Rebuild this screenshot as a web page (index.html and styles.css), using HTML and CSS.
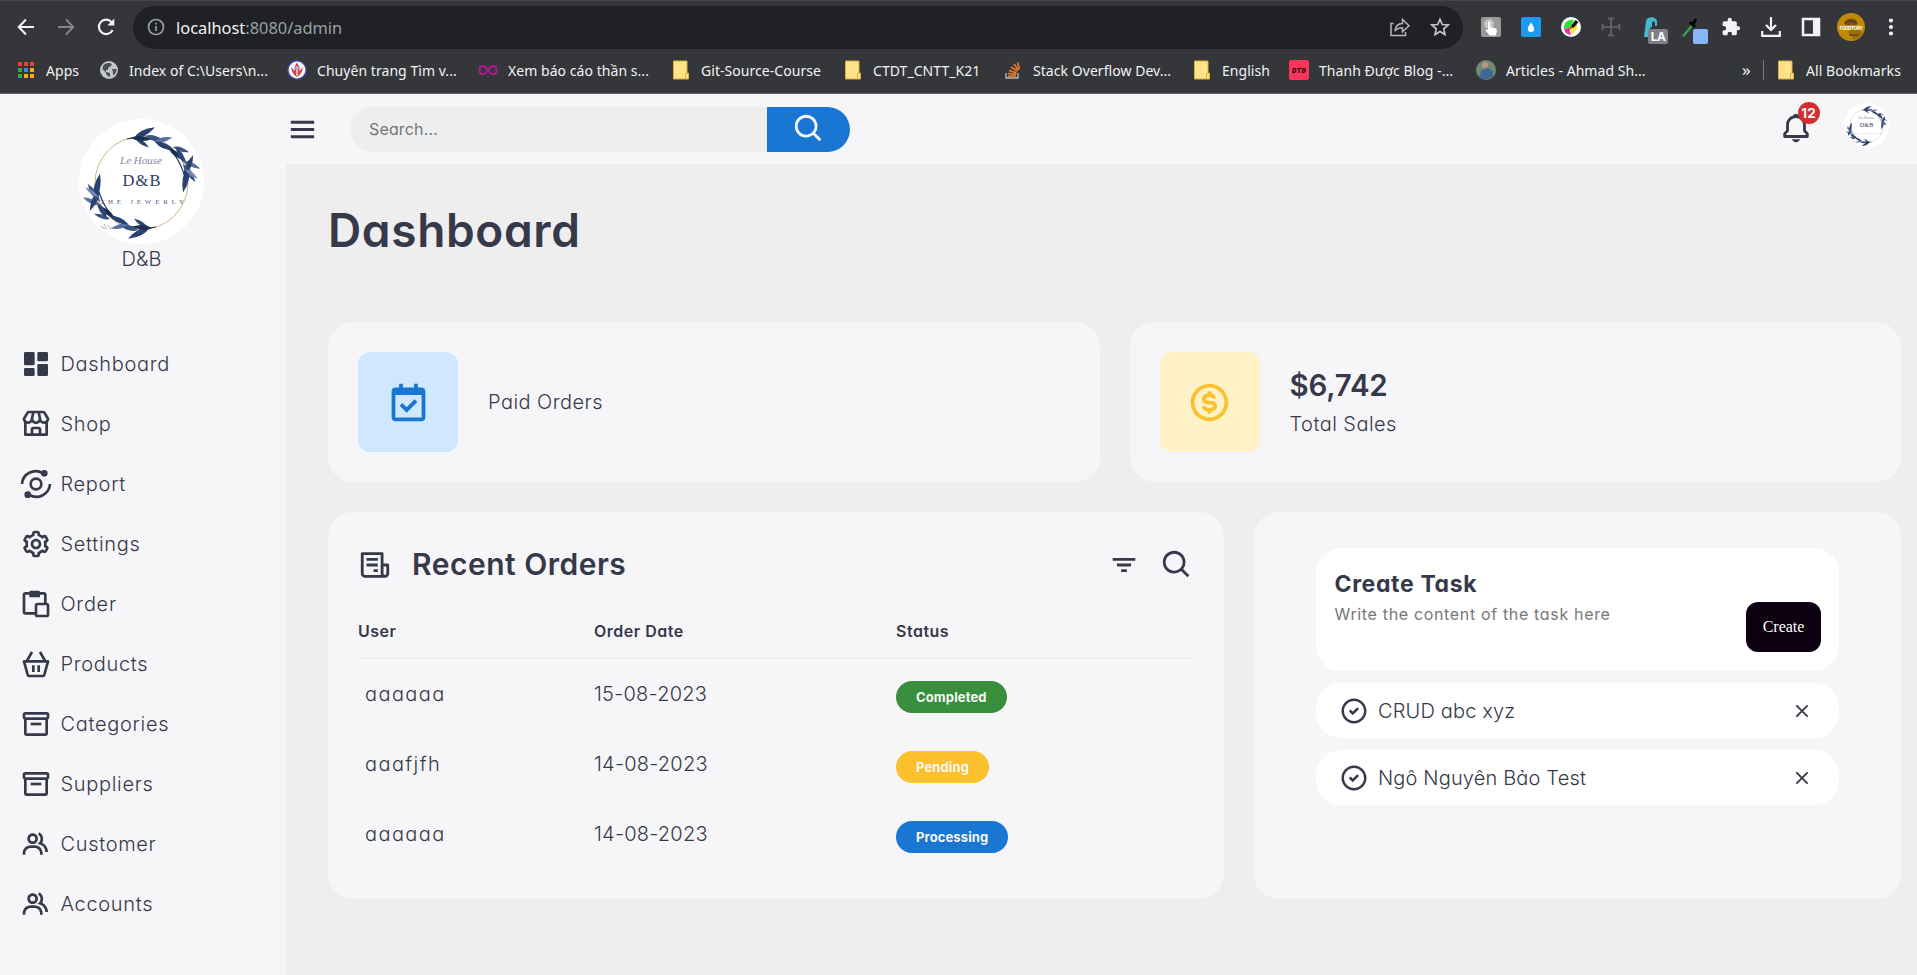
FILE: index.html
```html
<!DOCTYPE html>
<html lang="vi">
<head>
<meta charset="utf-8">
<title>Dashboard</title>
<link rel="stylesheet" href="styles.css">
</head>
<body>
<svg class="defs" width="0" height="0">
  <defs>
    <path id="leaf" d="M0 0Q8-5 20 0Q8 4.500 0 0Z"/>
    <g id="branch">
      <path d="M48 20Q66 16 82 24T106 58" fill="none" stroke="#24385c" stroke-width="1.200"/>
      <use href="#leaf" transform="translate(54 20) rotate(-28) scale(1.25)" fill="#2a4270"/>
      <use href="#leaf" transform="translate(56 19) rotate(34) scale(.85)" fill="#2f4775"/>
      <use href="#leaf" transform="translate(52 19) rotate(4) scale(1)" fill="#1d2f50"/>
      <use href="#leaf" transform="translate(66 17) rotate(12) scale(.9)" fill="#3b5484"/>
      <use href="#leaf" transform="translate(75 23) rotate(-14) scale(.95)" fill="#5a71a0"/>
      <use href="#leaf" transform="translate(76 23) rotate(24) scale(1.1)" fill="#2a4270"/>
      <use href="#leaf" transform="translate(94 28) rotate(18) scale(.85)" fill="#3b5484"/>
      <use href="#leaf" transform="translate(90 30) rotate(36) scale(1)" fill="#1d2f50"/>
      <use href="#leaf" transform="translate(97 29) rotate(58) scale(1)" fill="#2f4775"/>
      <use href="#leaf" transform="translate(104 42) rotate(24) scale(.95)" fill="#5a71a0"/>
      <use href="#leaf" transform="translate(105 57) rotate(-66) scale(1.15)" fill="#2a4270"/>
      <use href="#leaf" transform="translate(104 45) rotate(56) scale(1.1)" fill="#3b5484"/>
      <use href="#leaf" transform="translate(109 48) rotate(101) scale(1.3)" fill="#2a4270"/>
      <use href="#leaf" transform="translate(106 50) rotate(38) scale(.8)" fill="#7488b2"/>
    </g>
    <symbol id="logo" viewBox="0 0 125 125">
      <circle cx="62.500" cy="62.500" r="62.500" fill="#fff"/>
      <circle cx="62.500" cy="64" r="46.500" fill="none" stroke="#cdb77c" stroke-width="1"/>
      <use href="#branch"/>
      <use href="#branch" transform="rotate(180 62.500 64)"/>
      <path d="M22 107l4 3M25 105l3 5M29 106l3 4M31 111l2-3" stroke="#c9c2b4" stroke-width="1.200"/>
      <text x="41" y="45" class="logo-script" textLength="42">Le House</text>
      <text x="43.500" y="67" class="logo-name" textLength="38">D&amp;B</text>
      <text x="21" y="85" class="logo-sub" textLength="84">THE JEWERLY</text>
    </symbol>
    <symbol id="folder" viewBox="0 0 20 20"><path d="M2.500 1h13.500v12h1.500v6H2.500z" fill="#ffe28a" stroke="#d9b23c" stroke-width="1"/><path d="M14.500 18.500v-5h2.500" fill="none" stroke="#d9b23c"/></symbol>
    <symbol id="archive" viewBox="0 0 24 24"><path d="M20 3H4a2 2 0 0 0-2 2v2a2 2 0 0 0 1 1.720V19a2 2 0 0 0 2 2h14a2 2 0 0 0 2-2V8.720A2 2 0 0 0 22 7V5a2 2 0 0 0-2-2zM4 5h16v2H4zm1 14V9h14v10z"/><path d="M8 11h8v2H8z"/></symbol>
    <symbol id="group" viewBox="0 0 24 24"><path d="M16.604 11.048a5.670 5.670 0 0 0 .751-3.440c-.179-1.784-1.175-3.361-2.803-4.440l-1.105 1.666c1.119.742 1.800 1.799 1.918 2.974a3.693 3.693 0 0 1-1.072 2.986l-1.192 1.192 1.618.475C18.951 13.701 19 17.957 19 18h2c0-1.789-.956-5.285-4.396-6.952z"/><path d="M9.500 12c2.206 0 4-1.794 4-4s-1.794-4-4-4-4 1.794-4 4 1.794 4 4 4zm0-6c1.103 0 2 .897 2 2s-.897 2-2 2-2-.897-2-2 .897-2 2-2zm1.500 7H8c-3.309 0-6 2.691-6 6v1h2v-1c0-2.206 1.794-4 4-4h3c2.206 0 4 1.794 4 4v1h2v-1c0-3.309-2.691-6-6-6z"/></symbol>
    <symbol id="search" viewBox="0 0 24 24"><path d="M10 18a7.952 7.952 0 0 0 4.897-1.688l4.396 4.396 1.414-1.414-4.396-4.396A7.952 7.952 0 0 0 18 10c0-4.411-3.589-8-8-8s-8 3.589-8 8 3.589 8 8 8zm0-14c3.309 0 6 2.691 6 6s-2.691 6-6 6-6-2.691-6-6 2.691-6 6-6z"/></symbol>
    <symbol id="check" viewBox="0 0 24 24"><path d="M12 2C6.486 2 2 6.486 2 12s4.486 10 10 10 10-4.486 10-10S17.514 2 12 2zm0 18c-4.411 0-8-3.589-8-8s3.589-8 8-8 8 3.589 8 8-3.589 8-8 8z"/><path d="M8.600 11.600l2.400 2.400 4.300-4.300" fill="none" stroke="currentColor" stroke-width="2"/></symbol>
    <symbol id="close" viewBox="0 0 24 24"><path d="M6.800 6.800l10.400 10.400M17.200 6.800L6.800 17.200" fill="none" stroke="currentColor" stroke-width="1.700"/></symbol>
  </defs>
</svg>

<header class="browser">
  <div class="toolbar">
    <div class="nav-buttons">
      <svg width="20" height="20" viewBox="0 0 20 20" fill="none" stroke="#f1f3f4" stroke-width="2"><path d="M18 10H3M10 2.500L2.700 10l7.300 7.500"/></svg>
      <svg width="20" height="20" viewBox="0 0 20 20" fill="none" stroke="#828387" stroke-width="2"><path d="M2 10h15M10 2.500L17.300 10 10 17.500"/></svg>
      <svg width="20" height="20" viewBox="0 0 20 20" fill="none" stroke="#f1f3f4" stroke-width="2.200"><path d="M16.600 13A7.200 7.200 0 1 1 15.500 5"/><path d="M18.300 1.500v7h-7z" fill="#f1f3f4" stroke="none"/></svg>
    </div>
    <div class="address">
      <svg width="18" height="18" viewBox="0 0 18 18" fill="none" stroke="#9aa0a6" stroke-width="1.700"><circle cx="9" cy="9" r="7.500"/><path d="M9 8v5M9 4.800v1.800"/></svg>
      <span class="url"><b>localhost</b>:8080/admin</span>
      <svg class="share" width="22" height="22" viewBox="0 0 22 22" fill="none" stroke="#b4b7bb" stroke-width="1.500"><path d="M4.500 7.500H2v12h14.500V16"/><path d="M6 15c.5-5 3-7.500 7.500-7.500V3.500L20 9.800l-6.500 6v-4c-3.500 0-6 1-7.500 3.200z"/></svg>
      <svg width="20" height="20" viewBox="0 0 20 20" fill="none" stroke="#c6c9cd" stroke-width="1.600"><path d="M10 2.200l2.300 5.300 5.800.5-4.400 3.800 1.300 5.700-5-3-5 3 1.300-5.700L1.900 8l5.800-.5z"/></svg>
    </div>
    <div class="extensions">
      <svg width="20" height="20" viewBox="0 0 20 20"><rect width="20" height="20" rx="2" fill="#999"/><circle cx="8" cy="7" r="5" fill="#c4c4c4"/><path d="M7 5.500c0-1.500 2.400-1.500 2.400 0V10l5 1.200c1.200.4 1.600 1.500 1.400 2.800L15 18.500H8.500L4.500 13c1-.8 1.800-.5 2.500.3z" fill="#fff"/></svg>
      <svg width="20" height="20" viewBox="0 0 20 20"><rect width="20" height="20" rx="2" fill="#1d9bf0"/><path d="M10 5.500c1.600 2.600 3.200 4.400 3.200 6.300a3.200 3.200 0 0 1-6.400 0c0-1.900 1.600-3.700 3.200-6.300z" fill="#fff"/></svg>
      <svg width="20" height="20" viewBox="0 0 20 20"><circle cx="10" cy="10" r="10" fill="#fff"/><path d="M9 11L3 12a8 8 0 0 1 10-9z" fill="#28e23a"/><path d="M10 10l6-3a8 8 0 0 1-6 10z" fill="#f7ea32"/><path d="M8 11l2 7a8 8 0 0 1-7-6z" fill="#e92fae"/><path d="M5 16l8-11 3 2z" fill="#f03434"/><path d="M10 9l4.500-6 3 2-5 6z" fill="#111"/></svg>
      <svg width="20" height="20" viewBox="0 0 20 20" fill="none" stroke="#68696d" stroke-width="1.600"><path d="M10 1v18M1 10h18M7 1.500h6M7 18.500h6M1.500 7v6M18.500 7v6"/></svg>
      <span class="ext-badged"><svg width="20" height="20" viewBox="0 0 20 20"><path d="M3 20L5 4c1-5 11-5 11 1v4h-2V6c0-2-3-2-3 0v4l-2 1v9z" fill="#46b8cd"/></svg><i class="ext-la">LA</i></span>
      <span class="ext-badged"><svg width="20" height="20" viewBox="0 0 20 20"><path d="M2 19.500L11.500 8" stroke="#2fae55" stroke-width="2"/><path d="M9 5l5 5M11.500 8.500L15 2" stroke="#050505" stroke-width="3"/></svg><i class="ext-color"></i></span>
      <svg width="20" height="20" viewBox="0 0 24 24" fill="#f1f3f4"><path d="M20.500 11H19V7a2 2 0 0 0-2-2h-4V3.500a2.500 2.500 0 0 0-5 0V5H4a2 2 0 0 0-2 2v3.800h1.500a2.700 2.700 0 0 1 0 5.400H2V20a2 2 0 0 0 2 2h3.800v-1.500a2.700 2.700 0 0 1 5.400 0V22H17a2 2 0 0 0 2-2v-4h1.500a2.500 2.500 0 0 0 0-5z"/></svg>
      <svg width="20" height="20" viewBox="0 0 20 20" fill="none" stroke="#f1f3f4" stroke-width="2.200"><path d="M10 0v13M5 8l5 5 5-5M1.200 14v4.800h17.600V14"/></svg>
      <svg width="20" height="20" viewBox="0 0 20 20" fill="none" stroke="#f1f3f4"><rect x="2" y="2" width="16" height="16" stroke-width="2.500"/><path d="M14.700 2v16" stroke-width="5.500"/></svg>
      <svg class="profile" width="28" height="28" viewBox="0 0 28 28"><circle cx="14" cy="14" r="14" fill="#c08a06"/><path d="M7 10c2-6 12-6 14 0-1 3-4 2-7 2s-6 1-7-2z" fill="#7a5412"/><path d="M19 14l7 6a14 14 0 0 1-9 7l-6-8z" fill="#9c6e09"/><path d="M8 10c3-3 8-3 11 0M12 22h9" stroke="#3f2c10" fill="none"/><text x="2.500" y="17" class="profile-text" textLength="23">FOODTORY</text></svg>
      <svg width="20" height="20" viewBox="0 0 20 20" fill="#f1f3f4"><circle cx="10" cy="3.500" r="2.100"/><circle cx="10" cy="10" r="2.100"/><circle cx="10" cy="16.500" r="2.100"/></svg>
    </div>
  </div>
  <div class="bookmarks">
    <span class="bm"><svg width="20" height="20" viewBox="0 0 20 20"><path d="M2 2h4v4H2zM8 2h4v4H8zM14 2h4v4h-4z" fill="#ea4335"/><path d="M2 8h4v4H2z" fill="#34a853"/><path d="M8 8h4v4H8z" fill="#4285f4"/><path d="M14 8h4v4h-4zM8 14h4v4H8zM14 14h4v4h-4z" fill="#fbaf05"/><path d="M2 14h4v4H2z" fill="#34a853"/></svg>Apps</span>
    <span class="bm"><svg width="20" height="20" viewBox="0 0 20 20"><circle cx="10" cy="10" r="9" fill="#c4c7ca"/><path d="M4 6c2-3 5-3.500 8-2.500l1 1.500-4 3v2H7v2l4 1v4c-3-.5-4-3-4.500-5L3.500 9zM13 9h4.500c.4 3-1.500 5.500-3.500 6.500V12z" fill="#4b4d52"/></svg>Index of C:\Users\n...</span>
    <span class="bm"><svg width="20" height="20" viewBox="0 0 20 20"><circle cx="10" cy="10" r="9.200" fill="#f5f6fb" stroke="#3b4593" stroke-width="1.500"/><path d="M4 7c1 6 3 8 6 10 3-2 5-4 6-10l-3.500 4V7L10 2.500 7.500 7v4z" fill="#e03b3b"/><circle cx="10" cy="8" r="2" fill="#8ec2e8"/><path d="M10 10v6" stroke="#fff" stroke-width="1.200"/></svg>Chuyên trang Tìm v...</span>
    <span class="bm"><svg width="20" height="20" viewBox="0 0 20 20" fill="none" stroke="#b01a90" stroke-width="2"><path d="M10 10C7 4.500 1.500 4.500 1.500 10S7 15.500 10 10s8.500-5.500 8.500 0S13 15.500 10 10z"/></svg>Xem báo cáo thần s...</span>
    <span class="bm"><svg width="20" height="20"><use href="#folder"/></svg>Git-Source-Course</span>
    <span class="bm"><svg width="20" height="20"><use href="#folder"/></svg>CTDT_CNTT_K21</span>
    <span class="bm"><svg width="20" height="20" viewBox="0 0 20 20" fill="none"><path d="M3 13v5h12v-5" stroke="#b5b7ba" stroke-width="1.400"/><path d="M5 16h8M5.200 13.500l8 .7M6 10.500l7.500 2.200M8 7l6.500 4M11 4l4.500 6M14.500 2.500l2 6.500" stroke="#f48024" stroke-width="1.500"/></svg>Stack Overflow Dev...</span>
    <span class="bm"><svg width="20" height="20"><use href="#folder"/></svg>English</span>
    <span class="bm"><svg width="20" height="20" viewBox="0 0 20 20"><rect width="20" height="20" rx="2" fill="#fb3559"/><text x="3" y="12.800" class="dtd" textLength="14">DTD</text></svg>Thanh Được Blog -...</span>
    <span class="bm"><svg width="20" height="20" viewBox="0 0 20 20"><circle cx="10" cy="10" r="10" fill="#738a70"/><path d="M3 17l3-7 6-2 5 3v5a10 10 0 0 1-14 1z" fill="#3e6797"/><circle cx="9" cy="5" r="3" fill="#bb9684"/></svg>Articles - Ahmad Sh...</span>
    <span class="more">»</span>
    <span class="bm all"><svg width="20" height="20"><use href="#folder"/></svg>All Bookmarks</span>
  </div>
</header>

<div class="app">
  <aside class="sidebar">
    <div class="brand">
      <svg width="125" height="125"><use href="#logo"/></svg>
      <span>D&amp;B</span>
    </div>
    <nav class="menu">
      <a><svg viewBox="0 0 24 24"><path d="M4 13h6a1 1 0 0 0 1-1V4a1 1 0 0 0-1-1H4a1 1 0 0 0-1 1v8a1 1 0 0 0 1 1zm-1 7a1 1 0 0 0 1 1h6a1 1 0 0 0 1-1v-4a1 1 0 0 0-1-1H4a1 1 0 0 0-1 1v4zm10 0a1 1 0 0 0 1 1h6a1 1 0 0 0 1-1v-7a1 1 0 0 0-1-1h-6a1 1 0 0 0-1 1v7zm1-10h6a1 1 0 0 0 1-1V4a1 1 0 0 0-1-1h-6a1 1 0 0 0-1 1v5a1 1 0 0 0 1 1z"/></svg>Dashboard</a>
      <a><svg viewBox="0 0 24 24"><path d="M21.999 8a.997.997 0 0 0-.143-.515L19.147 2.970A2.010 2.010 0 0 0 17.433 2H6.565c-.698 0-1.355.372-1.714.971L2.142 7.485A.997.997 0 0 0 1.999 8c0 1.005.386 1.914 1 2.618V20a1 1 0 0 0 1 1h16a1 1 0 0 0 1-1v-9.382c.614-.704 1-1.613 1-2.618zm-2.016.251A2.002 2.002 0 0 1 17.999 10c-1.103 0-2-.897-2-2 0-.068-.025-.128-.039-.192l.020-.004L15.219 4h2.214l2.550 4.251zm-9.977-.186L10.818 4h2.361l.813 4.065C13.958 9.137 13.080 10 11.999 10s-1.959-.863-1.993-1.935zM6.565 4h2.214l-.760 3.804.020.004c-.015.064-.040.124-.040.192 0 1.103-.897 2-2 2a2.002 2.002 0 0 1-1.984-1.749L6.565 4zm3.434 15v-3h4v3h-4zm6 0v-3a2 2 0 0 0-2-2h-4a2 2 0 0 0-2 2v3h-3v-7.142c.321.083.652.142 1 .142a3.990 3.990 0 0 0 3-1.357c.733.832 1.807 1.357 3 1.357s2.267-.525 3-1.357A3.990 3.990 0 0 0 17.999 12c.348 0 .679-.059 1-.142V19h-3z"/></svg>Shop</a>
      <a><svg viewBox="0 0 24 24"><g fill="none" stroke="currentColor" stroke-width="2"><circle cx="12" cy="12" r="4"/><path d="M1.500 12a10.300 10.300 0 0 1 15.500-8.200M22.500 12a10.300 10.300 0 0 1-15.500 8.200"/></g><circle cx="18.200" cy="4" r="2.500"/><circle cx="5.800" cy="20" r="2.500"/></svg>Report</a>
      <a><svg viewBox="0 0 24 24"><path d="M12 16c2.206 0 4-1.794 4-4s-1.794-4-4-4-4 1.794-4 4 1.794 4 4 4zm0-6c1.084 0 2 .916 2 2s-.916 2-2 2-2-.916-2-2 .916-2 2-2z"/><path d="m2.845 16.136 1 1.730c.531.917 1.809 1.261 2.730.730l.529-.306A8.100 8.100 0 0 0 9 19.402V20c0 1.103.897 2 2 2h2c1.103 0 2-.897 2-2v-.598a8.132 8.132 0 0 0 1.896-1.111l.529.306c.923.530 2.198.188 2.731-.731l.999-1.729a2.001 2.001 0 0 0-.731-2.732l-.505-.292a7.718 7.718 0 0 0 0-2.224l.505-.292a2.002 2.002 0 0 0 .731-2.732l-.999-1.729c-.531-.920-1.808-1.265-2.731-.732l-.529.306A8.100 8.100 0 0 0 15 4.598V4c0-1.103-.897-2-2-2h-2c-1.103 0-2 .897-2 2v.598a8.132 8.132 0 0 0-1.896 1.111l-.529-.306c-.924-.531-2.200-.187-2.731.732l-.999 1.729a2.001 2.001 0 0 0 .731 2.732l.505.292a7.683 7.683 0 0 0 0 2.223l-.505.292a2.003 2.003 0 0 0-.731 2.733zm3.326-2.758A5.703 5.703 0 0 1 6 12c0-.462.058-.926.170-1.378a.999.999 0 0 0-.470-1.108l-1.123-.650.998-1.729 1.145.662a.997.997 0 0 0 1.188-.142 6.071 6.071 0 0 1 2.384-1.399A1 1 0 0 0 11 5.300V4h2v1.300a1 1 0 0 0 .708.956 6.083 6.083 0 0 1 2.384 1.399.999.999 0 0 0 1.188.142l1.144-.661 1 1.729-1.124.649a1 1 0 0 0-.470 1.108c.112.452.170.916.170 1.378 0 .461-.058.925-.171 1.378a1 1 0 0 0 .471 1.108l1.123.649-.998 1.729-1.145-.661a.996.996 0 0 0-1.188.142 6.071 6.071 0 0 1-2.384 1.399A1 1 0 0 0 13 18.700l.002 1.300H11v-1.300a1 1 0 0 0-.708-.956 6.083 6.083 0 0 1-2.384-1.399.992.992 0 0 0-1.188-.141l-1.144.662-1-1.729 1.124-.651a1 1 0 0 0 .471-1.108z"/></svg>Settings</a>
      <a><svg viewBox="0 0 24 24"><path d="M20 11V5c0-1.103-.897-2-2-2h-3a1 1 0 0 0-1-1H8a1 1 0 0 0-1 1H4c-1.103 0-2 .897-2 2v13c0 1.103.897 2 2 2h7c0 1.103.897 2 2 2h7c1.103 0 2-.897 2-2v-7c0-1.103-.897-2-2-2zm-9 2v5H4V5h3v2h8V5h3v6h-5c-1.103 0-2 .897-2 2zm2 7v-7h7l.001 7H13z"/></svg>Order</a>
      <a><svg viewBox="0 0 24 24"><path d="M21 9h-1.420l-3.712-6.496-1.736.992L17.277 9H6.723l3.146-5.504-1.737-.992L4.420 9H3a1.001 1.001 0 0 0-.965 1.263l2.799 10.263A2.004 2.004 0 0 0 6.764 22h10.473c.898 0 1.692-.605 1.930-1.475l2.799-10.263A.998.998 0 0 0 21 9zm-3.764 11H6.764L4.310 11h15.380z"/><path d="M9 13h2v5H9zm4 0h2v5h-2z"/></svg>Products</a>
      <a><svg><use href="#archive"/></svg>Categories</a>
      <a><svg><use href="#archive"/></svg>Suppliers</a>
      <a><svg><use href="#group"/></svg>Customer</a>
      <a><svg><use href="#group"/></svg>Accounts</a>
    </nav>
  </aside>

  <div class="content">
    <div class="navbar">
      <svg class="burger" viewBox="0 0 24 24"><path d="M4 6h16v2H4zm0 5h16v2H4zm0 5h16v2H4z"/></svg>
      <div class="search"><span class="search-input">Search...</span><span class="search-btn"><svg width="34" height="34"><use href="#search"/></svg></span></div>
      <span class="bell"><svg width="34" height="34" viewBox="0 0 24 24"><path d="M19 13.586V10c0-3.217-2.185-5.927-5.145-6.742C13.562 2.520 12.846 2 12 2s-1.562.520-1.855 1.258C7.185 4.074 5 6.783 5 10v3.586l-1.707 1.707A.996.996 0 0 0 3 16v2a1 1 0 0 0 1 1h16a1 1 0 0 0 1-1v-2a.996.996 0 0 0-.293-.707L19 13.586zM19 17H5v-.586l1.707-1.707A.996.996 0 0 0 7 14v-4c0-2.757 2.243-5 5-5s5 2.243 5 5v4c0 .266.105.520.293.707L19 16.414V17zm-7 5a2.980 2.980 0 0 0 2.818-2H9.182A2.980 2.980 0 0 0 12 22z"/></svg><i class="count">12</i></span>
      <svg class="avatar" width="45" height="45"><use href="#logo"/></svg>
    </div>
    <main class="main">
      <h1>Dashboard</h1>
      <div class="cards">
        <section class="card stat">
          <span class="tile blue"><svg width="45" height="45" viewBox="0 0 24 24"><path d="M19 4h-2V2h-2v2H9V2H7v2H5c-1.103 0-2 .897-2 2v14c0 1.103.897 2 2 2h14c1.103 0 2-.897 2-2V6c0-1.103-.897-2-2-2zM5 20V8h14v12z"/><path d="M11 17.414l5.707-5.707-1.414-1.414L11 14.586l-2.293-2.293-1.414 1.414z"/></svg></span>
          <div><p>Paid Orders</p></div>
        </section>
        <section class="card stat">
          <span class="tile yellow"><svg width="45" height="45" viewBox="0 0 24 24"><path d="M12 2C6.486 2 2 6.486 2 12s4.486 10 10 10 10-4.486 10-10S17.514 2 12 2zm0 18c-4.411 0-8-3.589-8-8s3.589-8 8-8 8 3.589 8 8-3.589 8-8 8z"/><path d="M12 11c-2 0-2-.630-2-1s.7-1 2-1 1.390.640 1.400 1h2A3 3 0 0 0 13 7.120V6h-2v1.090C9 7.420 8 8.710 8 10c0 1.120.520 3 4 3 2 0 2 .680 2 1s-.620 1-2 1c-1.840 0-2-.860-2-1H8c0 .920.660 2.550 3 2.920V18h2v-1.080c2-.340 3-1.630 3-2.920 0-1.120-.520-3-4-3z"/></svg></span>
          <div><h3>$6,742</h3><p>Total Sales</p></div>
        </section>
      </div>
      <div class="panels">
        <section class="card orders">
          <div class="orders-head">
            <svg width="34" height="34" viewBox="0 0 24 24"><path d="M21 11h-3V4a1 1 0 0 0-1-1H3a1 1 0 0 0-1 1v14c0 1.654 1.346 3 3 3h14c1.654 0 3-1.346 3-3v-6a1 1 0 0 0-1-1zM5 19a1 1 0 0 1-1-1V5h12v13c0 .351.061.688.171 1H5zm15-1a1 1 0 0 1-2 0v-5h2v5z"/><path d="M6 7h8v2H6zm0 4h8v2H6zm5 4h3v2h-3z"/></svg>
            <h2>Recent Orders</h2>
            <svg width="34" height="34" viewBox="0 0 24 24"><path d="M7 11h10v2H7zM4 7h16v2H4zm6 8h4v2h-4z"/></svg>
            <svg width="34" height="34"><use href="#search"/></svg>
          </div>
          <div class="row head"><span>User</span><span>Order Date</span><span>Status</span></div>
          <div class="row"><span class="user">aaaaaa</span><span class="date">15-08-2023</span><span class="status done">Completed</span></div>
          <div class="row"><span class="user">aaafjfh</span><span class="date">14-08-2023</span><span class="status pending">Pending</span></div>
          <div class="row"><span class="user">aaaaaa</span><span class="date">14-08-2023</span><span class="status process">Processing</span></div>
        </section>
        <section class="card tasks">
          <div class="create">
            <div><h4>Create Task</h4><p>Write the content of the task here</p></div>
            <span class="create-btn">Create</span>
          </div>
          <div class="task"><svg width="30" height="30"><use href="#check"/></svg><span>CRUD abc xyz</span><svg class="x" width="26" height="26"><use href="#close"/></svg></div>
          <div class="task"><svg width="30" height="30"><use href="#check"/></svg><span>Ngô Nguyên Bảo Test</span><svg class="x" width="26" height="26"><use href="#close"/></svg></div>
        </section>
      </div>
    </main>
  </div>
</div>
</body>
</html>
```
FILE: styles.css
```css
* { box-sizing: border-box; margin: 0; padding: 0; }
body {
  width: 1917px; height: 975px; overflow: hidden; background: #eee; color: #363949;
  font-family: Inter, "Open Sans", sans-serif; font-feature-settings: "cv11";
}
svg { flex: none; display: block; fill: currentColor; }
svg[fill="none"] { fill: none; }
svg.defs { position: absolute; }
i { font-style: normal; }

.browser { height: 94px; background: #35363a; border-top: 1px solid #46474b; border-bottom: 1px solid #5f6064; color: #f1f3f4; font-family: "Noto Sans", "Open Sans", sans-serif; font-feature-settings: normal; }
.toolbar { display: flex; align-items: center; height: 52px; }
.nav-buttons { display: flex; gap: 20px; width: 133px; padding-left: 16px; }
.address { display: flex; align-items: center; width: 1330px; height: 43px; border-radius: 22px; background: #202124; padding: 0 13px 0 14px; }
.url { margin-left: 11px; flex: 1; font-size: 16.4px; color: #9aa0a6; white-space: nowrap; }
.url b { font-weight: 400; color: #f1f3f4; }
.share { margin-right: 19px; }
.extensions { display: flex; align-items: center; gap: 20px; margin-left: 18px; }
.extensions .profile { margin: 0 -4px; }
.ext-badged { position: relative; }
.ext-badged i { position: absolute; left: 7px; top: 12px; width: 20px; height: 15px; border-radius: 2px; }
.ext-la { background: #808186; color: #fff; font-size: 12px; line-height: 15px; font-weight: 700; text-align: center; }
.ext-badged .ext-color { left: 12px; width: 15px; background: #8ab4f8; }
.profile-text { font: 700 5px Roboto, sans-serif; fill: #fff; }
.bookmarks { display: grid; grid-template-columns: 83px 188px 191px 193px 172px 160px 189px 97px 187px 266px 21px 1fr; align-items: center; height: 32px; margin-top: 1px; padding-left: 16px; font-size: 14px; letter-spacing: 0.05px; }
.bm { display: flex; align-items: center; gap: 10px; white-space: nowrap; }
.more { font-size: 17px; line-height: 20px; }
.all { height: 20px; padding-left: 12px; border-left: 1px solid #77787c; }
.dtd { font: italic 900 7px Roboto, sans-serif; fill: #16060a; }

.app { display: flex; height: 881px; }
.sidebar { width: 286px; background: #f6f6f9; padding-top: 25px; }
.brand { display: flex; flex-direction: column; align-items: center; width: 283px; font-size: 20px; font-weight: 300; }
.brand span { line-height: 30px; }
.menu { padding: 60px 0 0 19.5px; }
.menu a { display: flex; align-items: center; height: 60px; gap: 9px; font-size: 20px; font-weight: 300; letter-spacing: 0.68px; }
.menu svg { width: 32px; height: 32px; }
.logo-script { font: italic 11px "Liberation Serif", serif; fill: #7f8aa2; }
.logo-name { font: 16.500px "Liberation Serif", serif; fill: #2c4068; }
.logo-sub { font: 7px "Liberation Serif", serif; fill: #56657f; }

.content { flex: 1; min-width: 0; }
.navbar { display: flex; align-items: center; height: 70px; background: #f6f6f9; padding-right: 28.5px; }
.burger { width: 35px; height: 35px; margin-left: -1px; }
.search { display: flex; width: 500px; height: 45px; margin-left: 30px; border-radius: 23px; overflow: hidden; background: #eee; }
.search-input { flex: 1; padding-left: 19px; font-size: 16px; line-height: 44px; color: #757575; letter-spacing: 0.15px; }
.search-btn { width: 83px; background: #1976d2; color: #f6f6f9; padding: 5px 0 0 24.5px; }
.bell { position: relative; top: -1px; margin-left: auto; margin-right: 31px; }
.count { position: absolute; left: 19px; top: -9px; width: 22px; height: 22px; border-radius: 50%; background: #d32f2f; color: #f6f6f9; font: 700 13.5px/22px Inter, sans-serif; text-align: center; }
.avatar { margin-top: -7px; }

.main { padding: 36px 16px 0 42px; }
h1 { font-size: 46px; line-height: 60px; font-weight: 600; letter-spacing: 0.65px; }
.cards { display: grid; grid-template-columns: 1fr 1fr; gap: 30px; margin-top: 62px; }
.card { background: #f6f6f9; border-radius: 25px; }
.stat { display: flex; align-items: center; gap: 30px; height: 160px; padding: 0 30px; }
.stat p { font-size: 20px; font-weight: 300; line-height: 34px; letter-spacing: 0.45px; }
.stat h3 { font-size: 29.5px; font-weight: 600; line-height: 44px; letter-spacing: -0.2px; }
.tile { display: grid; place-items: center; width: 100px; height: 100px; border-radius: 12px; }
.blue { background: #cfe8ff; color: #1976d2; }
.yellow { background: #fff2c6; color: #fbc02d; }
.panels { display: grid; grid-template-columns: 896px 1fr; gap: 30px; margin-top: 30px; }
.panels .card { height: 387px; }
.orders { padding: 30px; }
.orders-head { display: flex; align-items: center; height: 46px; margin-bottom: 20px; }
.orders-head h2 { flex: 1; margin: -2px 0 0 20px; font-size: 30px; font-weight: 600; letter-spacing: 0.5px; }
.orders-head svg:last-child { margin-left: 19px; }
.row { display: grid; grid-template-columns: 236px 302px 1fr; height: 70px; font-size: 20px; font-weight: 300; line-height: 70px; }
.row.head { height: 51px; font-size: 16px; font-weight: 600; line-height: 46px; letter-spacing: 0.5px; border-bottom: 1px solid #eaeaec; }
.user { padding-left: 7px; letter-spacing: 1.4px; }
.date { letter-spacing: 0.23px; }
.status { justify-self: start; height: 32px; margin-top: 22px; padding: 0 20px; border-radius: 16px; font-size: 13px; line-height: 32px; font-weight: 700; letter-spacing: 0.12px; color: #f6f6f9; }
.done { background: #388e3c; }
.pending { background: #fbc02d; }
.process { background: #1976d2; }
.tasks { padding: 36px 62px 0; }
.create { display: flex; justify-content: space-between; height: 123px; background: #fff; border-radius: 25px; padding: 18px 18px 0 18.5px; }
.create h4 { font-size: 23px; line-height: 36px; font-weight: 700; letter-spacing: 0.65px; }
.create p { font-size: 16px; line-height: 24px; color: #777; letter-spacing: 0.66px; }
.create-btn { width: 75px; height: 50px; margin-top: 36px; border-radius: 12px; background: #0d0010; color: #fff; font: 16px/50px "Liberation Serif", serif; text-align: center; }
.task { display: flex; align-items: center; height: 55px; margin-top: 12px; background: #fff; border-radius: 25px; padding: 0 24px 0 23px; font-size: 20px; font-weight: 300; letter-spacing: 0.16px; gap: 9px; }
.task .x { margin-left: auto; }
```
